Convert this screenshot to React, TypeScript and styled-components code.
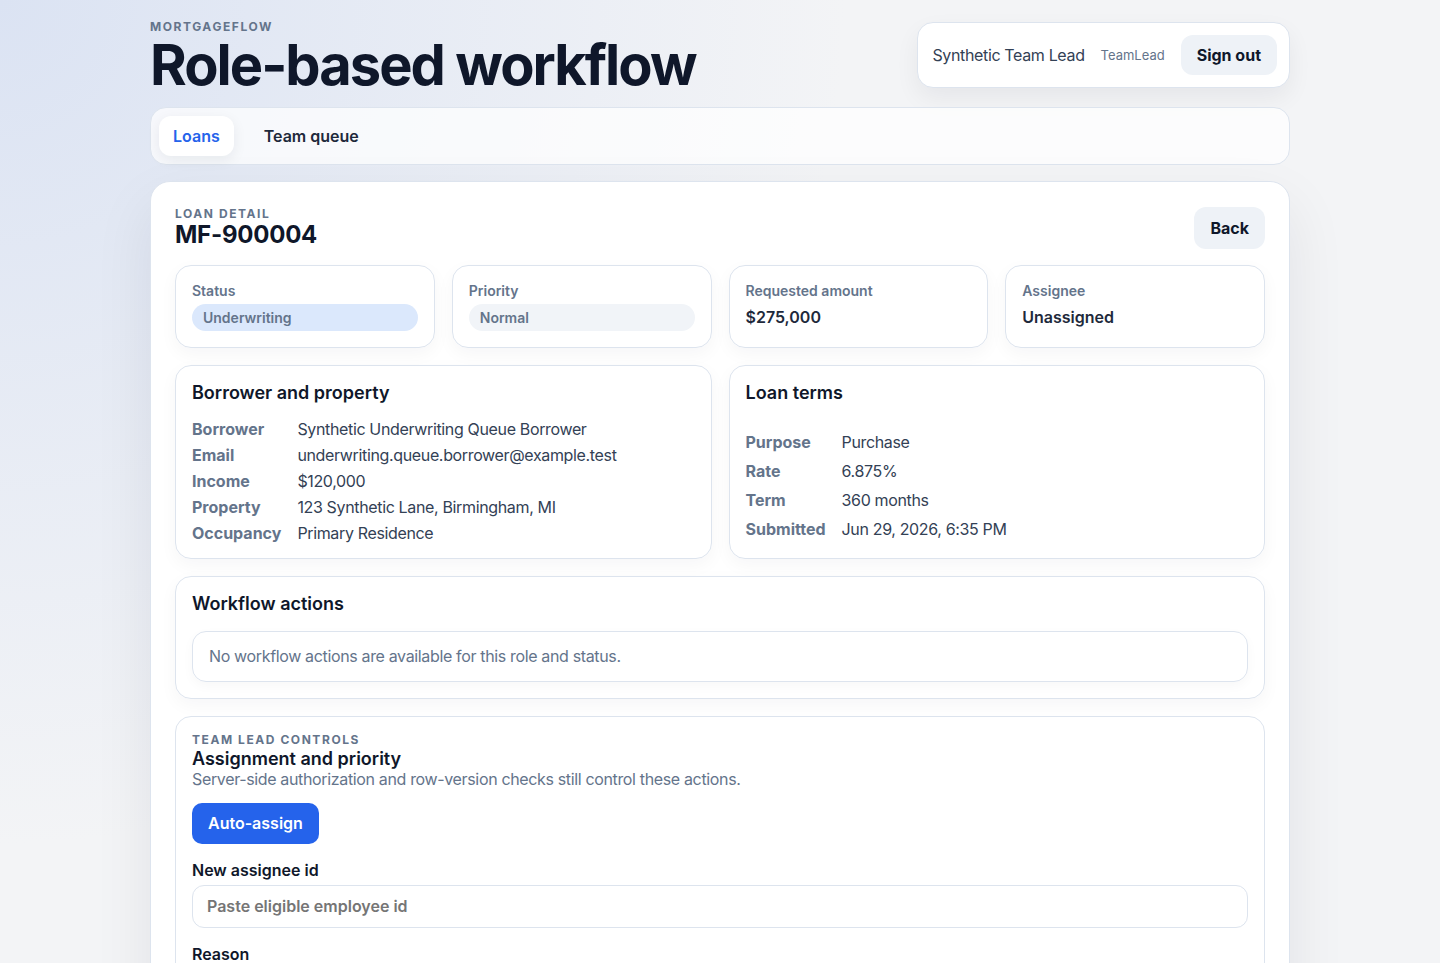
import styled, { createGlobalStyle } from 'styled-components';

const GlobalStyle = createGlobalStyle`
  * {
    box-sizing: border-box;
  }

  body {
    margin: 0;
    font-family: Inter, "Noto Sans", "Liberation Sans", sans-serif;
    color: #0f172a;
    background:
      radial-gradient(circle at 0% 0%, #dbe3f3 0%, rgba(219, 227, 243, 0) 45%),
      #f3f4f6;
    min-height: 100vh;
  }
`;

const colors = {
  ink: '#0f172a',
  body: '#334155',
  muted: '#64748b',
  line: '#dde4ee',
  soft: '#eef2f7',
  blue: '#2563eb',
};

// regular-weight copy runs a touch tighter than the bold labels
const tight = '-0.35px';

const Page = styled.div`
  width: 1140px;
  margin: 0 auto;
  padding: 20px 0 48px;
  display: flex;
  flex-direction: column;
`;

const Header = styled.header`
  display: flex;
  justify-content: space-between;
  align-items: flex-start;
  margin-bottom: 11px;
`;

const Brand = styled.div`
  display: flex;
  flex-direction: column;
`;

const Eyebrow = styled.span`
  font-size: 12px;
  line-height: 13px;
  font-weight: 700;
  letter-spacing: 0.13em;
  text-transform: uppercase;
  color: ${colors.muted};
`;

const BrandMark = styled(Eyebrow)`
  line-height: 14px;
`;

const PageTitle = styled.h1`
  margin: 0;
  font-size: 56px;
  line-height: 62px;
  font-weight: 700;
  letter-spacing: -0.035em;
  color: ${colors.ink};
`;

const UserBox = styled.div`
  display: flex;
  align-items: center;
  gap: 16px;
  margin-top: 2px;
  padding: 12px 12px 12px 14px;
  background: #ffffff;
  border: 1px solid ${colors.line};
  border-radius: 16px;
  box-shadow: 0 10px 24px rgba(15, 23, 42, 0.06);
`;

const UserName = styled.span`
  font-size: 16px;
  letter-spacing: ${tight};
  color: ${colors.body};
`;

const UserRole = styled.span`
  font-size: 13px;
  color: ${colors.muted};
`;

const SoftButton = styled.button<{ $h?: number }>`
  height: ${(p) => p.$h ?? 40}px;
  padding: 0 16px;
  border: none;
  border-radius: 12px;
  background: ${colors.soft};
  font-family: inherit;
  font-size: 16px;
  font-weight: 700;
  color: ${colors.ink};
  cursor: pointer;
`;

const TabBar = styled.nav`
  display: flex;
  gap: 16px;
  padding: 8px;
  background: rgba(255, 255, 255, 0.72);
  border: 1px solid ${colors.line};
  border-radius: 16px;
  margin-bottom: 16px;
`;

const Tab = styled.button<{ $active?: boolean }>`
  height: 40px;
  padding: 0 14px;
  border: none;
  border-radius: 12px;
  background: ${(p) => (p.$active ? '#ffffff' : 'transparent')};
  box-shadow: ${(p) => (p.$active ? '0 4px 14px rgba(15, 23, 42, 0.07)' : 'none')};
  font-family: inherit;
  font-size: 16px;
  font-weight: 600;
  color: ${(p) => (p.$active ? colors.blue : '#1e293b')};
  cursor: pointer;
`;

const Panel = styled.main`
  display: flex;
  flex-direction: column;
  gap: 17px;
  padding: 25px 24px 24px;
  background: #ffffff;
  border: 1px solid ${colors.line};
  border-radius: 20px;
  box-shadow: 0 24px 60px rgba(15, 23, 42, 0.08);
`;

const PanelHead = styled.div`
  display: flex;
  justify-content: space-between;
  align-items: flex-start;
  margin-bottom: -1px;
`;

const HeadText = styled.div`
  display: flex;
  flex-direction: column;
  gap: 1px;
`;

const LoanId = styled.h2`
  margin: 0;
  font-size: 24px;
  line-height: 28px;
  font-weight: 700;
  letter-spacing: -0.01em;
  color: ${colors.ink};
`;

const StatGrid = styled.div`
  display: grid;
  grid-template-columns: repeat(4, 1fr);
  gap: 17px;
`;

const StatCard = styled.div`
  display: flex;
  flex-direction: column;
  gap: 5px;
  padding: 16px;
  border: 1px solid ${colors.line};
  border-radius: 16px;
  box-shadow: 0 6px 18px rgba(15, 23, 42, 0.04);
`;

const StatLabel = styled.span`
  font-size: 14px;
  line-height: 17px;
  font-weight: 600;
  color: ${colors.muted};
`;

const StatValue = styled.span`
  font-size: 16px;
  line-height: 27px;
  font-weight: 600;
  color: #1e293b;
`;

const Pill = styled.span<{ $tone: 'blue' | 'gray' }>`
  display: flex;
  align-items: center;
  height: 27px;
  padding: 0 11px;
  border-radius: 999px;
  background: ${(p) => (p.$tone === 'blue' ? '#dbe8fc' : '#f1f4f8')};
  font-size: 14px;
  font-weight: 600;
  color: ${colors.muted};
`;

const TwoCol = styled.div`
  display: grid;
  grid-template-columns: 1fr 1fr;
  gap: 17px;
`;

const Card = styled.section`
  display: grid;
  gap: 16px;
  padding: 16px 16px 15px;
  border: 1px solid ${colors.line};
  border-radius: 16px;
  box-shadow: 0 6px 18px rgba(15, 23, 42, 0.04);
`;

const ActionsCard = styled(Card)`
  gap: 17px;
  padding-bottom: 16px;
`;

const CardTitle = styled.h3`
  margin: 0;
  font-size: 18px;
  line-height: 1.2;
  font-weight: 600;
  color: ${colors.ink};
`;

const Facts = styled.dl`
  margin: 0;
  display: grid;
  grid-template-columns: auto 1fr;
  column-gap: 16px;
  row-gap: 7px;
  font-size: 16px;
  line-height: 19px;
`;

const Term = styled.dt`
  font-weight: 700;
  color: ${colors.muted};
`;

const Detail = styled.dd`
  margin: 0;
  letter-spacing: ${tight};
  color: ${colors.body};
`;

const EmptyNote = styled.div`
  padding: 14px 16px;
  border: 1px solid ${colors.line};
  border-radius: 14px;
  font-size: 16px;
  line-height: 21px;
  letter-spacing: ${tight};
  color: ${colors.muted};
  box-shadow: 0 4px 12px rgba(15, 23, 42, 0.03);
`;

const Controls = styled.section`
  display: flex;
  flex-direction: column;
  padding: 16px;
  border: 1px solid ${colors.line};
  border-radius: 16px;
`;

const ControlsTitle = styled(CardTitle)`
  margin-top: 2px;
`;

const Hint = styled.p`
  margin: 0 0 14px;
  font-size: 16px;
  line-height: 19px;
  letter-spacing: ${tight};
  color: ${colors.muted};
`;

const PrimaryButton = styled.button`
  align-self: flex-start;
  height: 41px;
  padding: 0 16px;
  border: none;
  border-radius: 10px;
  background: ${colors.blue};
  font-family: inherit;
  font-size: 16px;
  font-weight: 600;
  color: #ffffff;
  cursor: pointer;
`;

const Field = styled.label`
  display: flex;
  flex-direction: column;
  gap: 5px;
  margin-top: 16px;
`;

const FieldLabel = styled.span`
  font-size: 16px;
  line-height: 20px;
  font-weight: 600;
  color: ${colors.ink};
`;

const Input = styled.input`
  height: 43px;
  padding: 0 14px;
  border: 1px solid ${colors.line};
  border-radius: 12px;
  font-family: inherit;
  font-size: 16px;
  font-weight: 600;
  color: ${colors.ink};
  outline: none;

  &::placeholder {
    color: #757575;
  }
`;

const TextArea = styled.textarea`
  height: 88px;
  padding: 12px 14px;
  border: 1px solid ${colors.line};
  border-radius: 12px;
  font-family: inherit;
  font-size: 16px;
  resize: vertical;
  outline: none;

  &::placeholder {
    color: #757575;
  }
`;

const borrower: [string, string][] = [
  ['Borrower', 'Synthetic Underwriting Queue Borrower'],
  ['Email', 'underwriting.queue.borrower@example.test'],
  ['Income', '$120,000'],
  ['Property', '123 Synthetic Lane, Birmingham, MI'],
  ['Occupancy', 'Primary Residence'],
];

const terms: [string, string][] = [
  ['Purpose', 'Purchase'],
  ['Rate', '6.875%'],
  ['Term', '360 months'],
  ['Submitted', 'Jun 29, 2026, 6:35 PM'],
];

function FactList({ rows }: { rows: [string, string][] }) {
  return (
    <Facts>
      {rows.flatMap(([k, v]) => [
        <Term key={k + '-t'}>{k}</Term>,
        <Detail key={k + '-d'}>{v}</Detail>,
      ])}
    </Facts>
  );
}

export default function App() {
  return (
    <>
      <GlobalStyle />
      <Page>
        <Header>
          <Brand>
            <BrandMark>MortgageFlow</BrandMark>
            <PageTitle>Role-based workflow</PageTitle>
          </Brand>
          <UserBox>
            <UserName>Synthetic Team Lead</UserName>
            <UserRole>TeamLead</UserRole>
            <SoftButton>Sign out</SoftButton>
          </UserBox>
        </Header>

        <TabBar>
          <Tab $active>Loans</Tab>
          <Tab>Team queue</Tab>
        </TabBar>

        <Panel>
          <PanelHead>
            <HeadText>
              <Eyebrow>Loan detail</Eyebrow>
              <LoanId>MF-900004</LoanId>
            </HeadText>
            <SoftButton $h={42}>Back</SoftButton>
          </PanelHead>

          <StatGrid>
            <StatCard>
              <StatLabel>Status</StatLabel>
              <Pill $tone="blue">Underwriting</Pill>
            </StatCard>
            <StatCard>
              <StatLabel>Priority</StatLabel>
              <Pill $tone="gray">Normal</Pill>
            </StatCard>
            <StatCard>
              <StatLabel>Requested amount</StatLabel>
              <StatValue>$275,000</StatValue>
            </StatCard>
            <StatCard>
              <StatLabel>Assignee</StatLabel>
              <StatValue>Unassigned</StatValue>
            </StatCard>
          </StatGrid>

          <TwoCol>
            <Card>
              <CardTitle>Borrower and property</CardTitle>
              <FactList rows={borrower} />
            </Card>
            <Card>
              <CardTitle>Loan terms</CardTitle>
              <FactList rows={terms} />
            </Card>
          </TwoCol>

          <ActionsCard>
            <CardTitle>Workflow actions</CardTitle>
            <EmptyNote>No workflow actions are available for this role and status.</EmptyNote>
          </ActionsCard>

          <Controls>
            <Eyebrow>Team lead controls</Eyebrow>
            <ControlsTitle>Assignment and priority</ControlsTitle>
            <Hint>Server-side authorization and row-version checks still control these actions.</Hint>
            <PrimaryButton>Auto-assign</PrimaryButton>
            <Field>
              <FieldLabel>New assignee id</FieldLabel>
              <Input placeholder="Paste eligible employee id" />
            </Field>
            <Field>
              <FieldLabel>Reason</FieldLabel>
              <TextArea placeholder="Why is this changing?" />
            </Field>
            <Field>
              <PrimaryButton>Reassign</PrimaryButton>
            </Field>
          </Controls>
        </Panel>
      </Page>
    </>
  );
}
